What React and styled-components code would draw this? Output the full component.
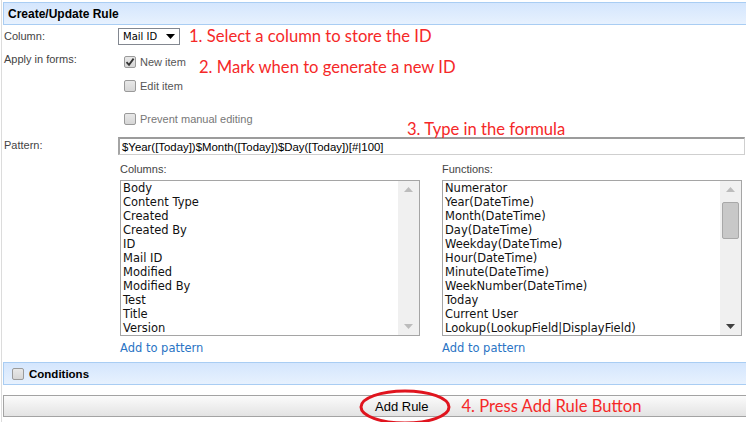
import styled, { createGlobalStyle } from "styled-components";

const GlobalStyle = createGlobalStyle`
  body {
    margin: 0;
    background: #fff;
    font-family: "Liberation Sans", Arial, sans-serif;
  }
`;

const columns = [
  "Body",
  "Content Type",
  "Created",
  "Created By",
  "ID",
  "Mail ID",
  "Modified",
  "Modified By",
  "Test",
  "Title",
  "Version",
];

const functions = [
  "Numerator",
  "Year(DateTime)",
  "Month(DateTime)",
  "Day(DateTime)",
  "Weekday(DateTime)",
  "Hour(DateTime)",
  "Minute(DateTime)",
  "WeekNumber(DateTime)",
  "Today",
  "Current User",
  "Lookup(LookupField|DisplayField)",
];

const Page = styled.div`
  width: 745px;
  height: 422px;
  margin-left: 1px;
  box-sizing: border-box;
  border-left: 1px solid #dcdcdc;
  padding: 2px 0 0 1px;
  overflow: hidden;
  color: #444;
`;

const SectionBar = styled.div`
  display: flex;
  align-items: center;
  gap: 5px;
  height: 21px;
  margin-top: ${(p) => p.$top || 0}px;
  padding-left: ${(p) => p.$pad || 4}px;
  border: 1px solid #a9cdf3;
  border-right: none;
  background: linear-gradient(#d4e6fd, #e7f1fe);
  font-size: ${(p) => p.$size || 12}px;
  font-weight: bold;
  color: #000;
`;

const Form = styled.div`
  display: flex;
  flex-direction: column;
  padding-left: 1px;
`;

const Row = styled.div`
  position: relative;
  display: flex;
  align-items: flex-start;
  margin-top: ${(p) => p.$top || 0}px;
`;

const Label = styled.div`
  width: 114px;
  flex: none;
  font-size: 11px;
  line-height: 17px;
  color: #444;
`;

const Select = styled.div`
  display: flex;
  align-items: center;
  justify-content: space-between;
  box-sizing: border-box;
  width: 62px;
  height: 17px;
  padding: 0 4px 0 4px;
  border: 1px solid #828790;
  font-family: "DejaVu Sans", Verdana, sans-serif;
  font-size: 10px;
  color: #000;
`;

const Note = styled.span`
  font-family: Lato, "Liberation Sans", sans-serif;
  font-size: 16.6px;
  line-height: 20px;
  color: #f52828;
  white-space: nowrap;
  margin-left: ${(p) => p.$left || 0}px;
  margin-top: ${(p) => p.$top || 0}px;
`;

const FloatNote = styled(Note)`
  position: absolute;
  left: ${(p) => p.$x}px;
  top: ${(p) => p.$y}px;
  margin: 0;
`;

const Checks = styled.div`
  display: flex;
  flex-direction: column;
  gap: 8px;
  width: 75px;
  padding: 3px 0 0 6px;
`;

const CheckItem = styled.label`
  display: flex;
  align-items: center;
  gap: 4px;
  height: 16px;
  font-family: "Liberation Sans", Arial, sans-serif;
  font-size: 11px;
  color: ${(p) => (p.$disabled ? "#777" : "#555")};
  white-space: nowrap;
`;

const Box = styled.span`
  display: inline-flex;
  align-items: center;
  justify-content: center;
  box-sizing: border-box;
  width: 12px;
  height: 12px;
  border: 1px solid #9a9a9a;
  border-radius: 2px;
  background: linear-gradient(#e8e8e8, #d6d6d6);
  flex: none;
`;

const PatternInput = styled.div`
  box-sizing: border-box;
  width: 627px;
  height: 18px;
  padding: 1px 2px;
  border: 1px solid #cfcfcf;
  border-top: 2px solid #9c9c9c;
  border-left: 2px solid #a4a4a4;
  font-family: "Liberation Sans", Arial, sans-serif;
  font-size: 11.4px;
  line-height: 14px;
  color: #000;
  white-space: nowrap;
`;

const Lists = styled.div`
  display: flex;
  gap: 22px;
  padding-left: 116px;
  margin-top: 7px;
`;

const ListCol = styled.div`
  display: flex;
  flex-direction: column;
  width: 300px;
`;

const SmallLabel = styled.div`
  font-family: "Liberation Sans", Arial, sans-serif;
  font-size: 11px;
  line-height: 14px;
  color: #444;
  margin-bottom: 4px;
`;

const ListBox = styled.div`
  display: flex;
  box-sizing: border-box;
  height: 156px;
  border: 1px solid #a5a5a5;
`;

const Items = styled.ul`
  flex: 1;
  margin: 0;
  padding: 0 0 0 2px;
  list-style: none;
  font-family: "DejaVu Sans", Verdana, sans-serif;
  font-size: 11.5px;
  line-height: 14px;
  color: #111;
  overflow: hidden;
  white-space: nowrap;
`;

const Scrollbar = styled.div`
  display: flex;
  flex-direction: column;
  align-items: center;
  width: 21px;
  background: #f0f0f0;
`;

const Arrow = styled.div`
  display: flex;
  align-items: center;
  justify-content: center;
  width: 17px;
  height: 17px;
  flex: none;
`;

const Track = styled.div`
  flex: 1;
  width: 17px;
  padding-top: 4px;
`;

const Thumb = styled.div`
  box-sizing: border-box;
  width: 17px;
  height: 37px;
  border: 1px solid #a8a8a8;
  border-radius: 2px;
  background: #c8c8c8;
`;

const Link = styled.a`
  margin-top: 5px;
  font-family: "DejaVu Sans", Verdana, sans-serif;
  font-size: 11.5px;
  line-height: 14px;
  color: #2a74c4;
  text-decoration: none;
`;

const ButtonRow = styled.div`
  position: relative;
  display: flex;
  align-items: center;
  margin-top: 10px;
  height: 22px;
  box-sizing: border-box;
  border: 1px solid #a3a3a3;
  border-right: none;
  background: linear-gradient(#fbfbfb, #e3e3e3);
`;

const RuleButton = styled.button`
  margin-left: 371px;
  padding: 0;
  border: none;
  background: none;
  font-family: "Liberation Sans", Arial, sans-serif;
  font-size: 13px;
  color: #000;
`;

const Ellipse = styled.svg`
  position: absolute;
  left: 352px;
  top: -8px;
`;

const Check = () => (
  <svg width="10" height="10" viewBox="0 0 10 10">
    <path d="M1.5 5.2 L4 7.8 L8.6 1.6" fill="none" stroke="#333" strokeWidth="1.8" />
  </svg>
);

const Checkbox = ({ checked }) => <Box>{checked && <Check />}</Box>;

const Tri = ({ up, color }) => (
  <svg width="9" height="5" viewBox="0 0 9 5">
    <path d={up ? "M0 5 L4.5 0 L9 5 Z" : "M0 0 L4.5 5 L9 0 Z"} fill={color} />
  </svg>
);

const Picker = ({ title, items, thumb }) => (
  <ListCol>
    <SmallLabel>{title}</SmallLabel>
    <ListBox>
      <Items>
        {items.map((it) => (
          <li key={it}>{it}</li>
        ))}
      </Items>
      <Scrollbar>
        <Arrow>
          <Tri up color="#bcbcbc" />
        </Arrow>
        <Track>{thumb && <Thumb />}</Track>
        <Arrow>
          <Tri color={thumb ? "#404040" : "#bcbcbc"} />
        </Arrow>
      </Scrollbar>
    </ListBox>
    <Link href="#">Add to pattern</Link>
  </ListCol>
);

export default function App() {
  return (
    <Page>
      <GlobalStyle />
      <SectionBar>Create/Update Rule</SectionBar>
      <Form>
        <Row $top={3}>
          <Label>Column:</Label>
          <Select>
            <span>Mail ID</span>
            <Tri color="#000" />
          </Select>
          <Note $left={9} $top={-2}>
            1. Select a column to store the ID
          </Note>
        </Row>
        <Row $top={5}>
          <Label>Apply in forms:</Label>
          <Checks>
            <CheckItem>
              <Checkbox checked />
              New item
            </CheckItem>
            <CheckItem>
              <Checkbox />
              Edit item
            </CheckItem>
          </Checks>
          <Note $top={6}>2. Mark when to generate a new ID</Note>
        </Row>
        <Row $top={14}>
          <Label />
          <Checks>
            <CheckItem $disabled>
              <Checkbox />
              Prevent manual editing
            </CheckItem>
          </Checks>
        </Row>
        <Row $top={10}>
          <FloatNote $x={403} $y={-18}>
            3. Type in the formula
          </FloatNote>
          <Label>Pattern:</Label>
          <PatternInput>$Year([Today])$Month([Today])$Day([Today])[#|100]</PatternInput>
        </Row>
        <Lists>
          <Picker title="Columns:" items={columns} />
          <Picker title="Functions:" items={functions} thumb />
        </Lists>
      </Form>
      <SectionBar $pad={8} $top={7} $size={11.5}>
        <Checkbox />
        Conditions
      </SectionBar>
      <ButtonRow>
        <Ellipse width="98" height="38" viewBox="0 0 98 38">
          <ellipse cx="49" cy="19" rx="44" ry="16" fill="none" stroke="#e0141e" strokeWidth="3" />
        </Ellipse>
        <RuleButton>Add Rule</RuleButton>
        <Note $left={33}>4. Press Add Rule Button</Note>
      </ButtonRow>
    </Page>
  );
}
